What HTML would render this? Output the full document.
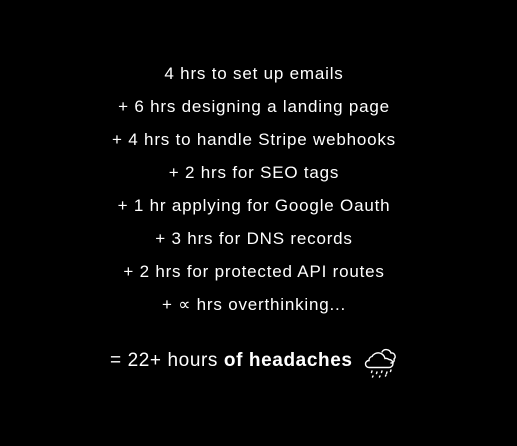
<html><head><style>
body{margin:0;background:#000;width:517px;height:446px;overflow:hidden;font-family:"Liberation Sans",sans-serif;color:#fff}
.l{position:absolute;left:0;width:508px;text-align:center;font-size:17px;line-height:20px;letter-spacing:0.8px}
.f{position:absolute;left:110px;top:349px;font-size:19px;line-height:24px;white-space:nowrap;letter-spacing:0.6px}
</style></head><body>
<div class="l" style="top:64px">4 hrs to set up emails</div>
<div class="l" style="top:97px">+ 6 hrs designing a landing page</div>
<div class="l" style="top:130px">+ 4 hrs to handle Stripe webhooks</div>
<div class="l" style="top:163px">+ 2 hrs for SEO tags</div>
<div class="l" style="top:196px">+ 1 hr applying for Google Oauth</div>
<div class="l" style="top:229px">+ 3 hrs for DNS records</div>
<div class="l" style="top:262px">+ 2 hrs for protected API routes</div>
<div class="l" style="top:295px">+ ∝ hrs overthinking...</div>
<div class="f">= 22+ hours <b>of headaches</b></div>
<svg style="position:absolute;left:360px;top:340px" width="42" height="42" viewBox="0 0 42 42" fill="none" stroke="#fff" stroke-width="1.4" stroke-linecap="round">
<path d="M9 27.5a3.5 3.5 0 0 1 0-7 a4 4 0 0 1 3-4 a7 7 0 0 1 13 2 a4.5 4.5 0 0 1 4 1 a4 4 0 0 1 0 8z"/>
<path d="M22 12a5 5 0 0 1 9 1 a3.5 3.5 0 0 1 3 6 a3 3 0 0 1-3 4"/>
<path d="M12 31l-.5 1.5M17 32l-.5 1.5M22 31l-.5 1.5M27 32l-.5 1.5M31 30l-.5 1.5M13 36l-.5 1M20 36l-.5 1M26 35l-.5 1"/>
</svg>
</body></html>
